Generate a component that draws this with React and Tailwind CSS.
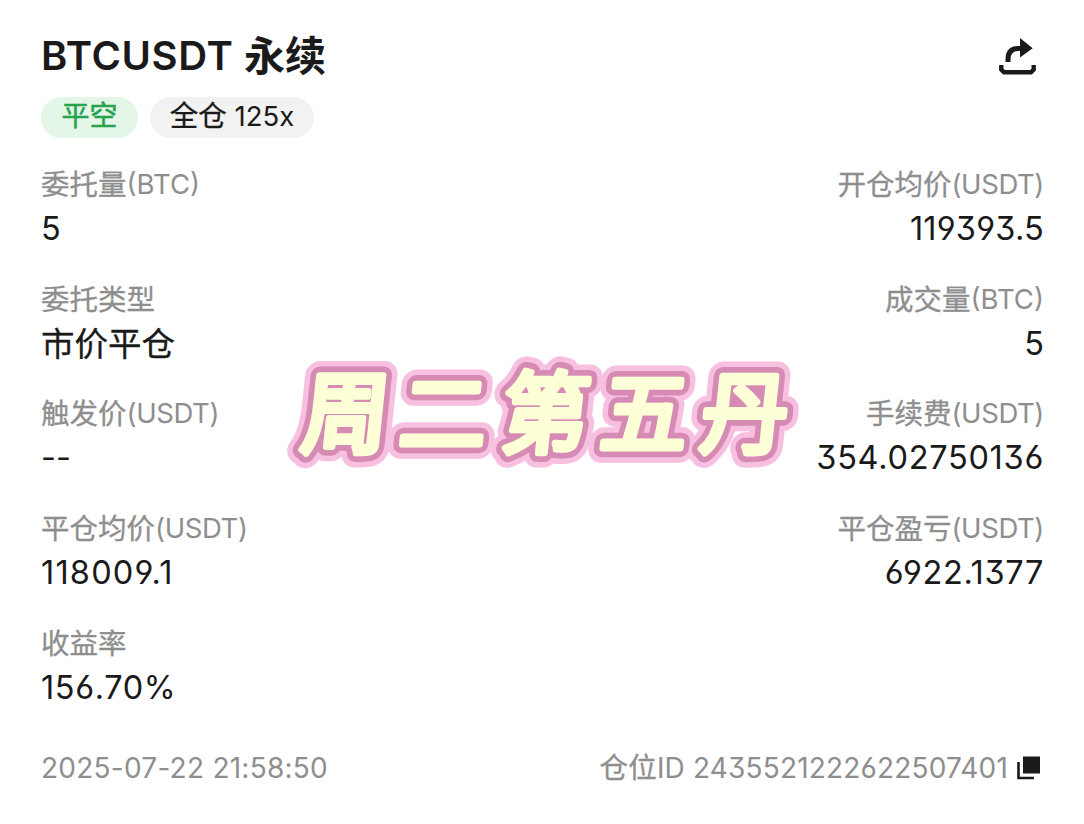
const rows = [
  {
    left: { label: '委托量', unit: '(BTC)', value: '5' },
    right: { label: '开仓均价', unit: '(USDT)', value: '119393.5', track: 'tracking-[0.2px]' },
  },
  {
    left: { label: '委托类型', value: '市价平仓', cjk: true },
    right: { label: '成交量', unit: '(BTC)', value: '5' },
  },
  {
    left: { label: '触发价', unit: '(USDT)', value: '--' },
    right: { label: '手续费', unit: '(USDT)', value: '354.02750136', track: 'tracking-[0.7px]' },
  },
  {
    left: { label: '平仓均价', unit: '(USDT)', value: '118009.1', track: 'tracking-[1.2px]' },
    right: { label: '平仓盈亏', unit: '(USDT)', value: '6922.1377', track: 'tracking-[0.65px]' },
  },
  {
    left: { label: '收益率', value: '156.70%', track: 'tracking-[0.6px]' },
  },
]

function Field({ label, unit, value, cjk, track, right }) {
  return (
    <div className={right ? 'flex flex-col items-end' : 'flex flex-col items-start'}>
      <div className="flex h-[36px] items-center leading-[36px] text-[#8e8e8e]">
        <span className="text-[28.5px] [-webkit-text-stroke:0.3px]">{label}</span>
        {unit && (
          <span
            className={
              unit === '(USDT)' ? 'mb-[2px] text-[27.5px] tracking-[-0.4px]' : 'mb-[2px] text-[27.5px]'
            }
          >
            {unit}
          </span>
        )}
      </div>
      <div className="mt-[2px] flex h-[48px] items-center leading-[48px] text-[#1a1a1a]">
        <span className={cjk ? 'text-[33.5px] [-webkit-text-stroke:0.3px]' : `text-[32.5px] ${track || ''}`}>
          {value}
        </span>
      </div>
    </div>
  )
}

function ShareIcon() {
  return (
    <svg width="38" height="38" viewBox="0 0 38 38" fill="none" stroke="#1a1a1a">
      <path d="M9 25V22.5Q9 11.5 19 11.5H22" strokeWidth="5" />
      <path d="M21 1L33.7 11.3L21 20.5Z" fill="#1a1a1a" stroke="none" />
      <path d="M2.3 28V32.5L5 35.2H32L34.7 32.5V28" strokeWidth="4.4" />
    </svg>
  )
}

function CopyIcon() {
  return (
    <svg width="24" height="24" viewBox="0 0 24 24" fill="none">
      <rect x="6" y="0.5" width="17" height="17" fill="#1a1a1a" />
      <path d="M1.5 6V22H17" stroke="#1a1a1a" strokeWidth="2.6" />
    </svg>
  )
}

const glyphs = [
  { ch: '周', x: 19 },
  { ch: '二', x: 117 },
  { ch: '第', x: 219 },
  { ch: '五', x: 318 },
  { ch: '丹', x: 418 },
]

// outer glow, outline, fill
const layers = [
  { color: '#f8c0e0', width: 29 },
  { color: '#d58bb3', width: 18 },
  { color: '#fdffd6', width: 6.5 },
]

function Sticker() {
  return (
    <svg
      className="pointer-events-none absolute left-[270px] top-[325px]"
      width="560"
      height="180"
      viewBox="-10 -25 560 180"
    >
      {layers.map((l) => (
        <g
          key={l.color}
          fill={l.color}
          stroke={l.color}
          strokeWidth={l.width}
          strokeLinejoin="round"
          strokeLinecap="round"
          fontFamily="'Noto Sans CJK SC', sans-serif"
          fontWeight="400"
          fontSize="89"
        >
          {glyphs.map((g) => (
            <text key={g.ch} transform={`translate(${g.x} 96) skewX(-6) scale(0.98 1)`}>
              {g.ch}
            </text>
          ))}
        </g>
      ))}
    </svg>
  )
}

export default function App() {
  return (
    <main className="relative flex h-[824px] w-[1084px] flex-col overflow-hidden bg-white pl-[41px] pr-[40px] pt-[31px] font-['Inter','Noto_Sans_CJK_SC',sans-serif] [font-feature-settings:'cv03','cv04','cv09']">
      <header className="flex h-[50px] items-center justify-between text-[#1a1a1a]">
        <h1 className="flex items-center whitespace-pre text-[40px] font-semibold leading-[50px]">
          <span className="tracking-[0.6px]">BTCUSDT </span>
          <span className="text-[41px] font-bold">永续</span>
        </h1>
        <div className="mr-[7px]">
          <ShareIcon />
        </div>
      </header>

      <div className="mt-[16px] flex gap-[12px] text-[28px] leading-[38px]">
        <span className="flex h-[41px] w-[97px] justify-center rounded-full bg-[#e3f6e8] text-[#27a34d] [-webkit-text-stroke:0.5px]">
          平空
        </span>
        <span className="flex h-[41px] w-[164px] justify-center whitespace-pre rounded-full bg-[#f2f2f2] text-[#1a1a1a]">
          <span className="text-[28.5px] [-webkit-text-stroke:0.3px]">全仓</span>
          <span className="text-[27.5px]"> 125x</span>
        </span>
      </div>

      <section className="mt-[29px] flex flex-col gap-[28.7px]">
        {rows.map((r) => (
          <div key={r.left.label} className="flex justify-between">
            <Field {...r.left} />
            {r.right && <Field {...r.right} right />}
          </div>
        ))}
      </section>

      <footer className="mt-[36px] flex h-[40px] items-center justify-between text-[28px] leading-[40px] text-[#8e8e8e]">
        <span className="tracking-[0.25px]">2025-07-22 21:58:50</span>
        <span className="mr-[3px] flex items-center gap-[9px]">
          <span className="whitespace-pre tracking-[0.17px]">
            <span className="text-[28.5px] [-webkit-text-stroke:0.3px]">仓位</span>
            ID 2435521222622507401
          </span>
          <CopyIcon />
        </span>
      </footer>

      <Sticker />
    </main>
  )
}
